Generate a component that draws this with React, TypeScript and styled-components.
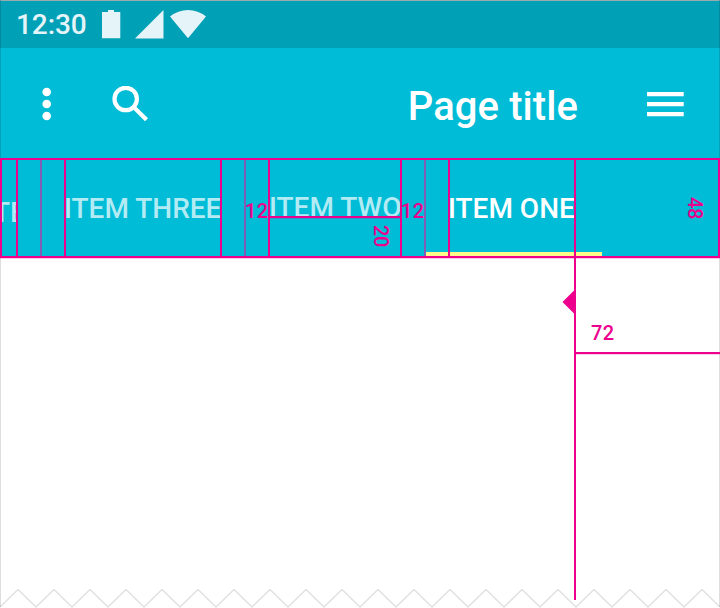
import React from "react";
import styled, { createGlobalStyle } from "styled-components";

const PINK = "#ec008c";

const GlobalStyle = createGlobalStyle`
  * { box-sizing: border-box; }
  body { margin: 0; background: #fff; font-family: Roboto, "Liberation Sans", sans-serif; }
`;

const Screen = styled.div`
  position: relative;
  display: flex;
  flex-direction: column;
  width: 720px;
  height: 608px;
  overflow: hidden;
  background: #fff;
`;

const StatusBar = styled.header`
  display: flex;
  align-items: center;
  height: 48px;
  padding-left: 16px;
  background: #00a0b6;
  color: #e4f4f8;
`;

const Clock = styled.time`
  width: 86px;
  padding-top: 2px;
  font-size: 28px;
  font-weight: 500;
  letter-spacing: -0.1px;
  line-height: 46px;
  white-space: nowrap;
`;

const AppBar = styled.div`
  display: flex;
  align-items: center;
  height: 110px;
  padding: 2px 36px 0 42px;
  background: #00bcd7;
  color: #fff;
`;

const Glyph = styled.svg`
  display: block;
  flex: none;
  fill: currentColor;
`;

const SearchSlot = styled.div`
  margin-left: 60px;
`;

const Title = styled.h1`
  margin: 6px 69px 0 auto;
  font-size: 40px;
  line-height: 48px;
  font-weight: 500;
  letter-spacing: 0.08px;
  white-space: nowrap;
`;

const TabStrip = styled.nav`
  display: grid;
  grid-template-columns: 41px 204px 180px 177px 1fr;
  height: 100px;
  background: #00bcd7;
`;

const Tab = styled.div<{ $active?: boolean; $raised?: boolean }>`
  display: flex;
  align-items: flex-start;
  padding: ${(p) => (p.$raised ? "33px 0 0 24px" : "34px 0 0 23px")};
  overflow: hidden;
  border-bottom: ${(p) => (p.$active ? "6px solid #fff989" : "0")};
  font-size: 28px;
  line-height: 33px;
  font-weight: 500;
  color: ${(p) => (p.$active ? "#fff" : "#b2ebf3")};
  white-space: nowrap;
`;

const ClippedTab = styled.div`
  display: flex;
  width: 18px;
  padding-top: 38px;
  overflow: hidden;
  font-size: 28px;
  font-weight: 500;
  line-height: 33px;
  color: #b2ebf3;
`;

const ClippedLabel = styled.span`
  margin-left: -7px;
`;

const Content = styled.main`
  flex: 1;
  display: flex;
  align-items: flex-end;
`;

const TornEdge = styled.svg`
  display: block;
  flex: none;
`;

const Frame = styled.div`
  position: absolute;
  inset: 0 0 1px;
  border: 1px solid rgba(0, 0, 0, 0.13);
  border-top-color: #9aabae;
  border-bottom: 0;
  pointer-events: none;
`;

const StripOutline = styled.div`
  position: absolute;
  left: 0;
  top: 158px;
  width: 720px;
  height: 100px;
  border: 2px solid ${PINK};
  box-shadow: 0 1px 0 rgba(236, 0, 140, 0.22);
`;

const VerticalGuide = styled.div<{ $x: number; $faint?: boolean }>`
  position: absolute;
  left: ${(p) => p.$x}px;
  top: 160px;
  width: 2px;
  height: 96px;
  background: ${(p) => (p.$faint ? "#7f5fb5" : PINK)};
`;

const Keyline = styled.div`
  position: absolute;
  left: 574px;
  top: 160px;
  width: 2px;
  height: 440px;
  background: ${PINK};
`;

const HorizontalGuide = styled.div<{ $x: number; $y: number; $w: number }>`
  position: absolute;
  left: ${(p) => p.$x}px;
  top: ${(p) => p.$y}px;
  width: ${(p) => p.$w}px;
  height: 2px;
  background: ${PINK};
  box-shadow: 0 0.5px 0 rgba(236, 0, 140, 0.4);
`;

const Measure = styled.span<{ $x: number; $y: number; $turned?: boolean }>`
  position: absolute;
  left: ${(p) => p.$x}px;
  top: ${(p) => p.$y}px;
  font-size: 20px;
  line-height: 24px;
  font-weight: 500;
  letter-spacing: ${(p) => (p.$turned ? "-0.4px" : "0.4px")};
  color: ${PINK};
  writing-mode: ${(p) => (p.$turned ? "vertical-rl" : "horizontal-tb")};
`;

const KeylineMarker = styled.svg`
  position: absolute;
  left: 562px;
  top: 289px;
  fill: ${PINK};
`;

const solidGuides = [16, 64, 220, 268, 400, 448];
const faintGuides = [40, 244, 424];

const zigzag = Array.from({ length: 41 }, (_, i) => `${i * 18},${i % 2 ? 1.5 : 19}`).join(" ");

export default function App() {
  return (
    <>
      <GlobalStyle />
      <Screen>
        <StatusBar>
          <Clock>12:30</Clock>
          <Glyph width="106" height="30" viewBox="102 9 106 30">
            <path d="M102 12h6v-2h6v2h6.3v26.3H102z" />
            <path d="M163.5 10v28.5H135z" />
            <path d="M170 16.5Q178 10 188 10T206 16.5L188 38.3z" />
          </Glyph>
        </StatusBar>
        <AppBar>
          <Glyph width="10" height="34" viewBox="42 87 10 34">
            <circle cx="46.7" cy="92" r="4.3" />
            <circle cx="46.7" cy="104" r="4.3" />
            <circle cx="46.7" cy="116" r="4.3" />
          </Glyph>
          <SearchSlot>
            <Glyph width="37" height="36" viewBox="112 86 37 36">
              <circle cx="125.7" cy="99" r="11.2" fill="none" stroke="#fff" strokeWidth="4.2" />
              <path d="M135.8 106.2L148 118.2L145 121.2L133 109.2z" />
            </Glyph>
          </SearchSlot>
          <Title>Page title</Title>
          <Glyph width="37" height="26" viewBox="647 91 37 26">
            <path d="M647 92h36.7v4.3h-36.7zM647 102h36.7v4.3h-36.7zM647 112h36.7v4.3h-36.7z" />
          </Glyph>
        </AppBar>
        <TabStrip>
          <ClippedTab>
            <ClippedLabel>TE</ClippedLabel>
          </ClippedTab>
          <Tab>ITEM THREE</Tab>
          <Tab $raised>ITEM TWO</Tab>
          <Tab $active>ITEM ONE</Tab>
        </TabStrip>
        <Content>
          <TornEdge width="720" height="20" viewBox="0 0 720 20">
            <polyline points={zigzag} fill="none" stroke="#e1e1e1" strokeWidth="1.5" />
          </TornEdge>
        </Content>
        <Frame />
        {faintGuides.map((x) => (
          <VerticalGuide key={x} $x={x} $faint />
        ))}
        {solidGuides.map((x) => (
          <VerticalGuide key={x} $x={x} />
        ))}
        <StripOutline />
        <Keyline />
        <HorizontalGuide $x={270} $y={216} $w={130} />
        <HorizontalGuide $x={576} $y={352} $w={144} />
        <KeylineMarker width="13" height="25" viewBox="0 0 13 25">
          <path d="M13 0.5v25L0.5 13z" />
        </KeylineMarker>
        <Measure $x={245} $y={199}>12</Measure>
        <Measure $x={401} $y={199}>12</Measure>
        <Measure $x={591} $y={321}>72</Measure>
        <Measure $x={369} $y={225} $turned>20</Measure>
        <Measure $x={683} $y={197} $turned>48</Measure>
      </Screen>
    </>
  );
}
